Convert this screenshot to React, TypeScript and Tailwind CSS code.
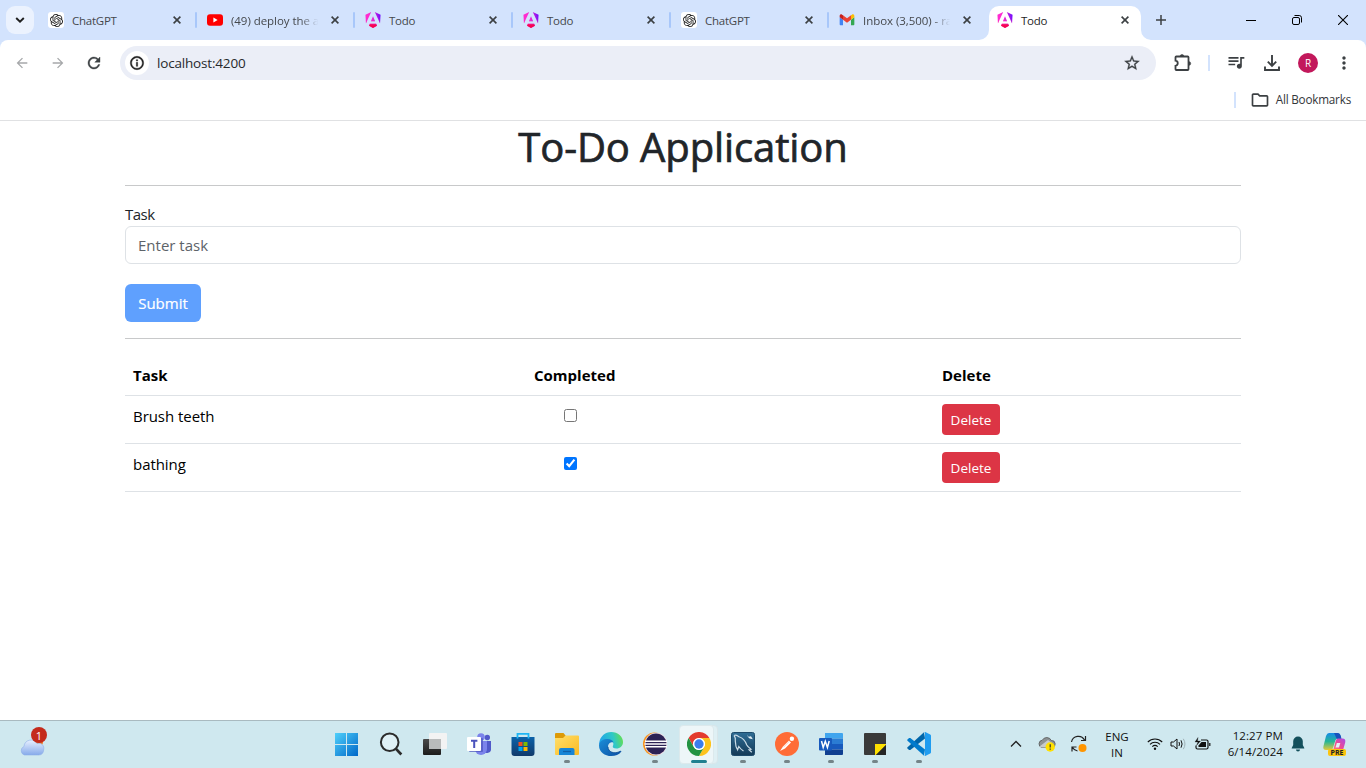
import { useState } from "react";
import type { ReactNode } from "react";
import { MdArrowBack, MdArrowForward, MdRefresh, MdInfoOutline, MdStarBorder, MdQueueMusic, MdMoreVert, MdOutlineFolder } from "react-icons/md";
import { SiOpenai } from "react-icons/si";

function Angular({ id }: { id: string }) {
  return (
    <svg width="16" height="16" viewBox="0 0 24 24" className="block">
      <defs>
        <linearGradient id={id + "a"} x1="0" y1="0.4" x2="1" y2="0.2">
          <stop offset="0.3" stopColor="#ff2bd0" />
          <stop offset="0.7" stopColor="#c01fe0" />
          <stop offset="1" stopColor="#6a0cff" />
        </linearGradient>
        <linearGradient id={id + "b"} x1="0" y1="0" x2="0" y2="1">
          <stop offset="0.45" stopColor="#f41fc0" stopOpacity="0" />
          <stop offset="0.85" stopColor="#f6064e" />
        </linearGradient>
      </defs>
      {[id + "a", id + "b"].map((g) => (
        <path
          key={g}
          fill={`url(#${g})`}
          d="M16.712 17.711H7.288l-1.204 2.916L12 24l5.916-3.373-1.204-2.916ZM14.692 0l7.832 16.855.814-12.856L14.692 0ZM9.308 0 .662 3.999l.814 12.856L9.308 0Zm-.405 13.93h6.198L12 6.396 8.903 13.93Z"
        />
      ))}
    </svg>
  );
}

function ChatGpt() {
  return (
    <span className="flex size-4 items-center justify-center rounded-[3px] bg-white">
      <SiOpenai size={13} color="#1a1a1a" />
    </span>
  );
}

function YouTube() {
  return (
    <svg width="16" height="16" viewBox="0 0 16 16" className="block">
      <rect y="2.3" width="16" height="11.4" rx="3" fill="#f00" />
      <path d="M6.4 5.6v4.8L10.6 8z" fill="#fff" />
    </svg>
  );
}

function Gmail() {
  return (
    <svg width="16" height="16" viewBox="48 30 96 92" className="block">
      <path fill="#4285f4" d="M58 108h14V74L52 59v43c0 3.32 2.69 6 6 6" />
      <path fill="#34a853" d="M120 108h14c3.32 0 6-2.69 6-6V59l-20 15" />
      <path fill="#fbbc04" d="M120 48v26l20-15v-8c0-7.42-8.47-11.65-14.4-7.2" />
      <path fill="#ea4335" d="M72 74V48l24 18 24-18v26L96 92" />
      <path fill="#c5221f" d="M52 51v8l20 15V48l-5.6-4.2c-5.94-4.45-14.4-.22-14.4 7.2" />
    </svg>
  );
}

function Close() {
  return (
    <svg width="8" height="8" viewBox="0 0 8 8" className="block shrink-0">
      <path d="M.6.6l6.8 6.8M7.4.6L.6 7.4" stroke="#3c4043" strokeWidth="1.6" />
    </svg>
  );
}

function Tab({ icon, title, fade, first, last }: { icon: ReactNode; title: string; fade?: boolean; first?: boolean; last?: boolean }) {
  return (
    <div className={`relative flex h-10 shrink-0 items-center pl-[10px] pr-4 ${first ? "w-[159px]" : "w-[158px]"}`}>
      {icon}
      <span
        className={`ml-2 mt-[2px] w-[89px] flex-none whitespace-nowrap text-[11.5px] leading-4 text-[#45484c] ${
          fade ? "tracking-[-0.05px] [mask-image:linear-gradient(to_right,black_78%,transparent_98%)]" : "tracking-[-0.25px]"
        }`}
      >
        {title}
      </span>
      <span className="ml-auto">
        <Close />
      </span>
      {!last && <span className="absolute -right-px top-3 h-4 w-[2px] translate-x-[-1px] rounded bg-[#a8c7fa]" />}
    </div>
  );
}

function TabStrip() {
  return (
    <div className="flex h-10 items-start bg-[#d3e3fd]">
      <div className="ml-[6px] mr-1 mt-[6px] flex size-7 shrink-0 items-center justify-center rounded-[9px] bg-[#ebf2fe]">
        <svg width="10" height="6" viewBox="0 0 10 6">
          <path d="M1.2 1l3.8 3.7L8.8 1" fill="none" stroke="#1f1f1f" strokeWidth="1.9" />
        </svg>
      </div>
      <Tab icon={<ChatGpt />} title="ChatGPT" first />
      <Tab icon={<YouTube />} title="(49) deploy the a" fade />
      <Tab icon={<Angular id="t1" />} title="Todo" />
      <Tab icon={<Angular id="t2" />} title="Todo" />
      <Tab icon={<ChatGpt />} title="ChatGPT" />
      <Tab icon={<Gmail />} title="Inbox (3,500) - ra" fade last />
      <div className="relative ml-[2px] mt-[6px] flex h-[34px] w-[152px] shrink-0 items-center rounded-t-[10px] bg-white pb-[6px] pl-2 pr-3">
        <svg width="10" height="10" viewBox="0 0 10 10" className="absolute -left-[10px] bottom-0">
          <path d="M10 0v10H0A10 10 0 0 0 10 0" fill="#fff" />
        </svg>
        <svg width="10" height="10" viewBox="0 0 10 10" className="absolute -right-[10px] bottom-0">
          <path d="M0 0v10h10A10 10 0 0 1 0 0" fill="#fff" />
        </svg>
        <Angular id="t3" />
        <span className="ml-2 mt-[2px] flex-1 text-[11.5px] leading-4 tracking-[-0.25px] text-[#1f1f1f]">Todo</span>
        <Close />
      </div>
      <div className="ml-[15px] mt-[15px]">
        <svg width="10" height="10" viewBox="0 0 10 10" className="block">
          <path d="M5 0v10M0 5h10" stroke="#3c4043" strokeWidth="1.5" />
        </svg>
      </div>
      <div className="ml-auto mr-[18px] flex h-10 items-center gap-9">
        <svg width="10" height="10" viewBox="0 0 10 10"><path d="M0 5.5h10" stroke="#000" /></svg>
        <svg width="10" height="10" viewBox="0 0 10 10" fill="none" stroke="#000">
          <rect x="0.5" y="2.5" width="7" height="7" rx="1.5" />
          <path d="M2.5.5h4.7a2.3 2.3 0 0 1 2.3 2.3v4.7" />
        </svg>
        <svg width="10" height="10" viewBox="0 0 10 10"><path d="M0 0l10 10M10 0L0 10" stroke="#000" strokeWidth="1.1" /></svg>
      </div>
    </div>
  );
}

function Toolbar() {
  return (
    <div className="bg-[#d3e3fd]">
      <div className="h-[81px] rounded-t-[8px] border-b border-[#e0e1e3] bg-white">
        <div className="flex h-[46px] items-center pl-[14px]">
          <MdArrowBack size={16} color="#a6a8aa" />
          <MdArrowForward size={16} color="#a6a8aa" className="ml-5" />
          <MdRefresh size={18} color="#3c4043" className="ml-[19px] [&>path:last-child]:stroke-[#3c4043] [&>path:last-child]:[stroke-width:0.5px]" />
          <div className="ml-[17px] flex h-[34px] w-[1036px] items-center rounded-full bg-[#ebeef7] pl-[5px] pr-[15px]">
            <span className="flex size-6 items-center justify-center rounded-full bg-white">
              <MdInfoOutline size={16} color="#1f1f1f" className="[&>path:last-child]:stroke-[#1f1f1f] [&>path:last-child]:[stroke-width:0.6px]" />
            </span>
            <span className="ml-2 flex-1 text-[13.5px] tracking-[-0.18px] text-[#27292c]">localhost:4200</span>
            <MdStarBorder size={18} color="#3c4043" className="[&>path:last-child]:stroke-[#3c4043] [&>path:last-child]:[stroke-width:0.4px]" />
          </div>
          <svg width="20" height="20" viewBox="0 0 20 20" className="ml-[17px]" fill="none" stroke="#3c4043" strokeWidth="1.8">
            <path d="M3.300 3.500h11.400q.8 0 .8.800v11.900q0 .8-.8.800H3.300q-.8 0-.8-.8v-3.400c3-.500 3-4.600 0-5.100V4.300q0-.8.800-.8z" />
            <path d="M7.200 3.200a1.800 1.700 0 0 1 3.600 0zM16 8.700a1.700 1.800 0 0 1 0 3.600z" fill="#3c4043" strokeWidth="0.6" />
          </svg>
          <span className="ml-[15px] h-4 w-[2px] bg-[#d3e3fd]" />
          <MdQueueMusic size={20} color="#3c4043" className="ml-[16px] -translate-y-px" />
          <svg width="16" height="16" viewBox="0 0 16 16" className="ml-[18px]" fill="none" stroke="#3c4043" strokeWidth="1.9">
            <path d="M8 0v10.500M3.800 6.600L8 10.800l4.200-4.200M1 11.500V15h14v-3.500" />
          </svg>
          <span className="ml-[18px] flex size-5 items-center justify-center rounded-full bg-[#c2185b] text-[10px] text-white">R</span>
          <MdMoreVert size={20} color="#3c4043" className="ml-4" />
        </div>
        <div className="flex h-7 items-center justify-end pr-[15px]">
          <span className="h-4 w-[2px] bg-[#d3e3fd]" />
          <MdOutlineFolder size={20} color="#3c4043" className="ml-[14px]" />
          <span className="ml-[6px] text-[11.700px] tracking-[-0.2px] text-[#333639]">All Bookmarks</span>
        </div>
      </div>
    </div>
  );
}

function TodoPage() {
  const [rows, setRows] = useState([
    { name: "Brush teeth", done: false },
    { name: "bathing", done: true },
  ]);
  return (
    <main className="h-[599px] bg-white px-[125px] text-[15px] leading-6 text-[#212529]">
      <h1 className="text-center text-[40px] leading-[52px] tracking-[-0.1px] [-webkit-text-stroke:0.7px_#212529]">To-Do Application</h1>
      <hr className="mt-3 border-[#c8c9ca]" />
      <label className="mt-4 block h-6 tracking-[-0.5px]">Task</label>
      <input
        placeholder="Enter task"
        className="block h-[38px] w-full rounded-[6px] border border-[#dee2e6] px-3 placeholder:text-[#5d6369]"
      />
      <button className="mt-5 block h-[38px] w-[76px] rounded-[6px] bg-[#5fa0fe] text-white [-webkit-text-stroke:0.2px_white]">Submit</button>
      <hr className="mt-4 border-[#c8c9ca]" />
      <table className="mt-4 w-full table-fixed border-separate border-spacing-0 text-black">
        <colgroup>
          <col className="w-[401px]" />
          <col className="w-[408px]" />
          <col />
        </colgroup>
        <thead>
          <tr className="h-[41px] text-left *:border-b *:border-[#dee2e6] *:px-2 *:py-0 *:font-bold">
            <th>Task</th>
            <th>Completed</th>
            <th>Delete</th>
          </tr>
        </thead>
        <tbody>
          {rows.map((r, i) => (
            <tr key={r.name} className="h-12 *:border-b *:border-[#dee2e6] *:p-2 *:align-top">
              <td className="tracking-[-0.05px]">{r.name}</td>
              <td>
                <input
                  type="checkbox"
                  checked={r.done}
                  onChange={() => setRows(rows.map((x, j) => (j === i ? { ...x, done: !x.done } : x)))}
                  className="ml-[30px] mt-[5px] block size-[13px]"
                />
              </td>
              <td>
                <button className="block h-[31px] w-[58px] rounded-[4px] bg-[#dc3545] pt-px text-[13.5px] leading-[30px] text-white">Delete</button>
              </td>
            </tr>
          ))}
        </tbody>
      </table>
    </main>
  );
}

function Windows() {
  return (
    <svg width="24" height="24" viewBox="0 0 24 24">
      <defs>
        <linearGradient id="win" x1="0" y1="0" x2="1" y2="1">
          <stop stopColor="#4fd0fb" /><stop offset="1" stopColor="#0067c8" />
        </linearGradient>
      </defs>
      <path fill="url(#win)" d="M0 1h11v11H0zM12 1h11v11H12zM0 13h11v11H0zM12 13h11v11H12z" />
    </svg>
  );
}

function SearchIcon() {
  return (
    <svg width="24" height="24" viewBox="0 0 24 24" fill="none" stroke="#2b2b2b">
      <circle cx="10.700" cy="10.300" r="8.800" strokeWidth="2" fill="#dff0f5" />
      <path d="M17 16.800l5.300 5.700" strokeWidth="2.700" />
    </svg>
  );
}

function TaskView() {
  return (
    <svg width="26" height="24" viewBox="0 0 26 24">
      <defs>
        <linearGradient id="tv" x1="0" y1="0" x2="0" y2="1"><stop stopColor="#4a4a4a" /><stop offset="1" stopColor="#1c1c1c" /></linearGradient>
      </defs>
      <rect x="1" y="7" width="18" height="16" rx="1" fill="url(#tv)" />
      <rect x="7" y="1" width="18" height="16" rx="1" fill="#f3f3f3" />
      <path d="M7 7h12v10H7z" fill="#b9bbbb" />
    </svg>
  );
}

function Teams() {
  return (
    <svg width="24" height="24" viewBox="0 0 24 24">
      <circle cx="20.300" cy="5.500" r="2.700" fill="#5059c9" />
      <path d="M16 9h8v7.500a4 4 0 0 1-8 1z" fill="#5059c9" />
      <circle cx="14" cy="5" r="3.800" fill="#7b83eb" />
      <path d="M8 9h12v8a6 6 0 0 1-12 0z" fill="#7b83eb" />
      <rect x="2" y="6" width="14" height="14" rx="1" fill="#4b53bc" opacity=".7" />
      <rect y="5" width="14" height="14" rx="1" fill="#fff" />
      <path d="M4 8.800h6.400M7.200 8.800v7.200" stroke="#4b53bc" strokeWidth="2" />
    </svg>
  );
}

function Store() {
  return (
    <svg width="24" height="24" viewBox="0 0 24 24">
      <defs><linearGradient id="st" x1="0" y1="0" x2="0" y2="1"><stop stopColor="#0b62a9" /><stop offset="1" stopColor="#113a6b" /></linearGradient></defs>
      <path d="M6.500 7V1.800h11V7" fill="none" stroke="#1fb6f5" strokeWidth="1.800" />
      <path d="M.5 5h23V21a3 3 0 0 1-3 3h-17a3 3 0 0 1-3-3z" fill="url(#st)" />
      <path d="M6.500 5v1.500M17.500 5v1.500" stroke="#1fb6f5" strokeWidth="1.800" />
      <path d="M7.500 10h4v4h-4z" fill="#f25022" /><path d="M12.500 10h4v4h-4z" fill="#7fba00" />
      <path d="M7.500 15h4v4h-4z" fill="#00a4ef" /><path d="M12.500 15h4v4h-4z" fill="#ffb900" />
    </svg>
  );
}

function Explorer() {
  return (
    <svg width="24" height="24" viewBox="0 0 24 24">
      <defs><linearGradient id="ex" x1="0" y1="0" x2="1" y2="1"><stop stopColor="#ffdf6b" /><stop offset="1" stopColor="#fbba22" /></linearGradient></defs>
      <path d="M0 2q0-1 1-1h7.500l2 2.500v4H0z" fill="#dd9a07" />
      <path d="M0 6h8l2.500-2.500H23q1 0 1 1V22q0 1-1 1H1q-1 0-1-1z" fill="url(#ex)" />
      <path d="M4 23v-5q0-2 2-2h11.500q2 0 2 2v5z" fill="#1685d6" />
      <path d="M8 19.500h8" stroke="#0f5fa8" strokeWidth="1.300" />
    </svg>
  );
}

function Edge() {
  return (
    <svg width="24" height="24" viewBox="0 0 24 24">
      <defs>
        <linearGradient id="e1" x1="0" y1="0.500" x2="1" y2="0.300"><stop stopColor="#1fa3ea" /><stop offset=".6" stopColor="#30c8c6" /><stop offset="1" stopColor="#66e04b" /></linearGradient>
        <linearGradient id="e2" x1="0" y1="0" x2="1" y2="1"><stop stopColor="#1b8ed8" /><stop offset="1" stopColor="#0c4fa3" /></linearGradient>
      </defs>
      <path d="M.2 11C1 4.500 6 0 12.200 0 19 0 24 4.800 24 10c0 4-3 6.500-6.500 6.500-3 0-4.300-1.200-3.600-2.500 1.700-3-.9-6-4.400-6-4 0-8 1.500-9.300 5z" fill="url(#e1)" />
      <path d="M.1 12.500C.8 9 4.500 7 8.500 7c3 0 5.500 1.300 6 3.500-1.500-1-5.500.2-5.500 4.300 0 4.500 6 8.200 12.600 4.300.5-.3 1 .2.600.7C20 22.800 16.500 24 12.200 24 5.500 24-.7 19 .1 12.500z" fill="url(#e2)" />
      <path d="M9 14.800c0 5 6 8 12.600 4.300" fill="none" stroke="#0a4b94" strokeWidth=".8" />
    </svg>
  );
}

function Eclipse() {
  return (
    <svg width="24" height="24" viewBox="0 0 24 24">
      <circle cx="11.500" cy="12" r="11.500" fill="#f7941e" />
      <circle cx="13" cy="12" r="11.200" fill="#f1dfe6" />
      <circle cx="13" cy="12" r="10.600" fill="#2c2255" />
      <path d="M2 9.200h22M1.500 12h22.500M2 14.800h22" stroke="#fff" strokeWidth="1.600" />
    </svg>
  );
}

function Chrome() {
  return (
    <svg width="24" height="24" viewBox="0 0 48 48">
      <circle cx="24" cy="24" r="24" fill="#fff" />
      <path d="M3.200 12A24 24 0 0 1 44.800 12H24a12 12 0 0 0-10.400 18z" fill="#e33b2e" />
      <path d="M44.800 12A24 24 0 0 1 24 48l10.400-18A12 12 0 0 0 24 12z" fill="#fcc31e" />
      <path d="M24 48A24 24 0 0 1 3.200 12l10.400 18a12 12 0 0 0 20.800 0z" fill="#229342" />
      <circle cx="24" cy="24" r="11.700" fill="#fff" />
      <circle cx="24" cy="24" r="9.300" fill="#3b7ded" />
    </svg>
  );
}

function MySql() {
  return (
    <svg width="24" height="24" viewBox="0 0 24 24" fill="none">
      <defs><linearGradient id="my" x1="0" y1="0" x2="0" y2="1"><stop stopColor="#2f6d95" /><stop offset="1" stopColor="#143a57" /></linearGradient></defs>
      <rect x=".5" y=".5" width="23" height="23" rx="2" fill="url(#my)" stroke="#1d4a6b" />
      <path d="M3 3.500c2-1 3.500.3 5 1.300C12 6 14.500 9.500 15.800 13c.8 1.700 2.200 2.800 4.200 4.200l-2 .6 2.800 2.500M3 3.500c1 1.500 1.600 2.300 1.300 4.300-.2 2 .5 3.500.5 5.500 0 1.700 1.200 3 1.800 4.500l1.200-3.300c1.200 1.800 2.600 3.200 4.700 4.500" stroke="#c9dbe6" strokeWidth="1.200" />
      <path d="M16 2.500l1.500 2.300 2.500-.6 1.800 3-3.200-.8-1.600-1.500z" fill="#e4eef4" />
    </svg>
  );
}

function Postman() {
  return (
    <svg width="24" height="24" viewBox="0 0 24 24">
      <circle cx="12" cy="12" r="12" fill="#ff6c37" />
      <path d="M5 19l3-4.500 6-6 2 2-6 6z" fill="#fff" />
      <path d="M14.500 8l2 2" stroke="#ff6c37" strokeWidth=".8" />
      <circle cx="16.900" cy="6.800" r="2.200" fill="#fff" />
      <path d="M8.500 15.200l6-6" stroke="#f9b79e" strokeWidth=".6" />
    </svg>
  );
}

function Word() {
  return (
    <svg width="24" height="24" viewBox="0 0 24 24">
      <path d="M6 1h17q1 0 1 1v4.500H6z" fill="#41a5ee" /><path d="M6 6.500h18V12H6z" fill="#2b7cd3" />
      <path d="M6 12h18v5.500H6z" fill="#185abd" /><path d="M6 17.500h18V22q0 1-1 1H6z" fill="#103f91" />
      <rect y="6" width="13" height="12.500" rx="1" fill="#185abd" />
      <path d="M2.500 9l1.700 6.500L6.300 9.300l2.100 6.200L10.200 9" fill="none" stroke="#fff" strokeWidth="1.500" />
    </svg>
  );
}

function Notes() {
  return (
    <svg width="24" height="24" viewBox="0 0 24 24">
      <path d="M2 1h20q1 0 1 1v21H2q-1 0-1-1V2q0-1 1-1z" fill="#3a3a3a" />
      <path d="M12 12h11v1L13 23h-1z" fill="#fee000" /><path d="M13 23l10-10v10z" fill="#252525" />
    </svg>
  );
}

function VsCode() {
  return (
    <svg width="24" height="24" viewBox="0 0 24 24">
      <path d="M18 6.500L3.300 17.900q-.6.400-1.200 0L.5 16.500q-.600-.600 0-1.200L17 .300z" fill="#0065a9" />
      <path d="M18 17.500L3.300 6.100q-.600-.400-1.200 0L.500 7.500q-.600.600 0 1.200L17 23.700z" fill="#007acc" />
      <path d="M17 .300q.5-.5 1.200-.2l5 2.400q.8.400.8 1.200v16.600q0 .800-.800 1.200l-5 2.400q-.700.300-1.200-.2.900.500 1-.7V1q-.100-1.200-1-.7z" fill="#1f9cf0" />
    </svg>
  );
}

function AppSlot({ children, running, active }: { children: ReactNode; running?: boolean; active?: boolean }) {
  return (
    <div className="relative flex h-12 w-11 shrink-0 items-center justify-center">
      {active && (
        <>
          <span className="absolute left-1 top-[5px] h-[39px] w-[37px] rounded-[4px] border border-[#d8e6ea] bg-[#dff0f4]" />
          <span className="absolute left-[2px] top-[5px] h-[39px] w-[35px] rounded-[4px] border border-[#dce9ec] bg-[#edf6f8]" />
        </>
      )}
      <span className="relative flex">{children}</span>
      {running && <span className="absolute bottom-[5px] left-[19px] h-[3px] w-[6px] rounded-full bg-[#748488]" />}
      {active && <span className="absolute bottom-[5px] left-[14px] h-[3px] w-4 rounded-full bg-[#1f8090]" />}
    </div>
  );
}

function Tray() {
  return (
    <div className="ml-auto flex h-full items-center pb-px text-[11.5px] leading-4 text-[#111]">
      <svg width="12" height="8" viewBox="0 0 12 8" className="mr-[16px]"><path d="M1 6.500l5-5 5 5" fill="none" stroke="#222" strokeWidth="1.300" /></svg>
      <svg width="18" height="16" viewBox="0 0 18 16" className="mr-[14px]">
        <path d="M4 11.500a3.700 3.700 0 0 1 .3-7.300A5 5 0 0 1 13.300 4.500 3.500 3.500 0 0 1 14 11.500z" fill="#8d9395" stroke="#555" strokeWidth=".8" />
        <path d="M1.500 10.500L10 4l4 3v4.500H4z" fill="#c7cbcc" />
        <circle cx="12.200" cy="11" r="4.700" fill="#ffe000" />
        <path d="M12.200 8.300v3.200M12.200 12.500v1.200" stroke="#333" strokeWidth="1.200" />
      </svg>
      <svg width="18" height="18" viewBox="0 0 18 18" className="mr-[17px]" fill="none" stroke="#222" strokeWidth="1.200">
        <path d="M1.500 7A7 7 0 0 1 14.500 5M15.500 1v4.500H11M2 16.500V12h4.500M2.500 12.500a7 7 0 0 0 5 3.500" />
        <circle cx="12.500" cy="13" r="4" fill="#ff9500" stroke="none" />
      </svg>
      <div className="w-6 whitespace-nowrap pt-px text-center">ENG<br />IN</div>
      <svg width="16" height="14" viewBox="0 0 16 14" className="ml-[18px] mr-[7px]" fill="none" stroke="#111" strokeWidth="1.100">
        <path d="M.8 5a10.200 10.200 0 0 1 14.400 0M3 7.400a7 7 0 0 1 10 0M5.300 9.700a3.900 3.900 0 0 1 5.400 0" />
        <circle cx="8" cy="11.800" r="1.200" fill="#111" stroke="none" />
      </svg>
      <svg width="17" height="14" viewBox="0 0 17 14" className="mr-[7px]" fill="none" stroke="#111" strokeWidth="1">
        <path d="M1 5h2.500L7 2v10L3.500 9H1zM9 5q1 2 0 4M11 3.300q2.200 3.700 0 7.400" />
        <path d="M13.300 1.800q3.300 5.200 0 10.400" stroke="#9fb1b6" />
      </svg>
      <svg width="17" height="14" viewBox="0 0 17 14" className="mr-[16px]" fill="none" stroke="#111" strokeWidth="1.200">
        <path d="M7 3h5.500q1.500 0 1.500 1.500v6q0 1.500-1.500 1.500h-9Q2 12 2 10.500V8.500M15.800 6v3" />
        <path d="M7.500 5h4.500v5H4.500V8.500z" fill="#111" stroke="none" /><path d="M4 .5L1 5h3L2.500 8.500 6.500 4h-3z" fill="#111" strokeWidth=".3" />
      </svg>
      <div className="w-[56px] whitespace-nowrap text-right tracking-[0.1px]">12:27 PM<br />6/14/2024</div>
      <svg width="14" height="16" viewBox="0 0 14 16" className="ml-2 mr-[17px]" fill="#14505c">
        <path d="M7 .5a4.800 4.800 0 0 1 4.800 4.800V9L13.300 12q.2.600-.5.600H1.200q-.700 0-.5-.6L2.200 9V5.300A4.800 4.800 0 0 1 7 .5zM5 13.500h4a2 2 0 0 1-4 0z" />
      </svg>
      <span className="relative mr-[19px] flex">
        <svg width="25" height="24" viewBox="0 0 25 24">
          <defs>
            <linearGradient id="c1" x1="0" y1="0" x2="0" y2="1"><stop stopColor="#168be8" /><stop offset=".5" stopColor="#26b696" /><stop offset="1" stopColor="#e4c93b" /></linearGradient>
            <linearGradient id="c2" x1="1" y1="0" x2="0" y2="1"><stop stopColor="#a94ce8" /><stop offset=".5" stopColor="#ee4a91" /><stop offset="1" stopColor="#ff985b" /></linearGradient>
          </defs>
          <path d="M7 1h8.500q2 0 2.700 2.500L19 6.500h-3q-2 0-2.700 2L11 16q-.7 2-2.500 2H4q-3.500 0-2.500-4L4 4q1-3 3-3z" fill="url(#c1)" />
          <path d="M12 1h4q2 0 2.700 2.500L19.500 7H16q-2 0-2.500-3z" fill="#1753bd" />
          <path d="M16 6.500h4.500q3.500 0 2.700 4l-1.700 6q-1 3-3.500 3H9q2-.5 2.700-3l2-7.500q.6-2.500 2.300-2.500z" fill="url(#c2)" />
          <path d="M14.800 11h3.500l-1.300 4.500h-3.500z" fill="#e8eff7" />
        </svg>
        <span className="absolute bottom-0 left-[6px] flex h-[7px] w-[18px] items-center justify-center rounded-[2px] bg-[#fcc40f] text-[7px] font-bold leading-none text-[#222]">PRE</span>
      </span>
    </div>
  );
}

function Weather() {
  return (
    <div className="relative ml-5 mt-[6px] h-[30px] w-7 shrink-0">
      <svg width="26" height="30" viewBox="0 0 26 30">
        <defs><linearGradient id="cl" x1="0" y1="0" x2="0" y2="1"><stop stopColor="#e7f0ff" /><stop offset="1" stopColor="#86aaea" /></linearGradient></defs>
        <circle cx="18" cy="15" r="5" fill="#f47b20" />
        <path d="M4.500 28a4.500 4.500 0 0 1-.5-8.500A7 7 0 0 1 17 16.500a5 5 0 0 1 6.800 5q0 6.500-5 6.500z" fill="url(#cl)" stroke="#8eafe8" strokeWidth=".6" />
      </svg>
      <span className="absolute left-[11px] top-0 flex size-4 items-center justify-center rounded-full bg-[#c42b1c] text-[11px] leading-none text-white">1</span>
    </div>
  );
}

function Taskbar() {
  return (
    <footer className="flex h-12 border-t border-[#a9bac0] bg-[#cfe8ef]">
      <Weather />
      <div className="ml-[277px] flex h-12 -translate-y-px">
        <AppSlot><Windows /></AppSlot>
        <AppSlot><SearchIcon /></AppSlot>
        <AppSlot><TaskView /></AppSlot>
        <AppSlot><Teams /></AppSlot>
        <AppSlot><Store /></AppSlot>
        <AppSlot running><Explorer /></AppSlot>
        <AppSlot><Edge /></AppSlot>
        <AppSlot running><Eclipse /></AppSlot>
        <AppSlot active><Chrome /></AppSlot>
        <AppSlot running><MySql /></AppSlot>
        <AppSlot running><Postman /></AppSlot>
        <AppSlot running><Word /></AppSlot>
        <AppSlot running><Notes /></AppSlot>
        <AppSlot running><VsCode /></AppSlot>
      </div>
      <Tray />
    </footer>
  );
}

export default function App() {
  return (
    <div className="h-[768px] w-[1366px] overflow-hidden bg-white font-['Open_Sans','Noto_Sans',sans-serif]">
      <TabStrip />
      <Toolbar />
      <TodoPage />
      <Taskbar />
    </div>
  );
}
